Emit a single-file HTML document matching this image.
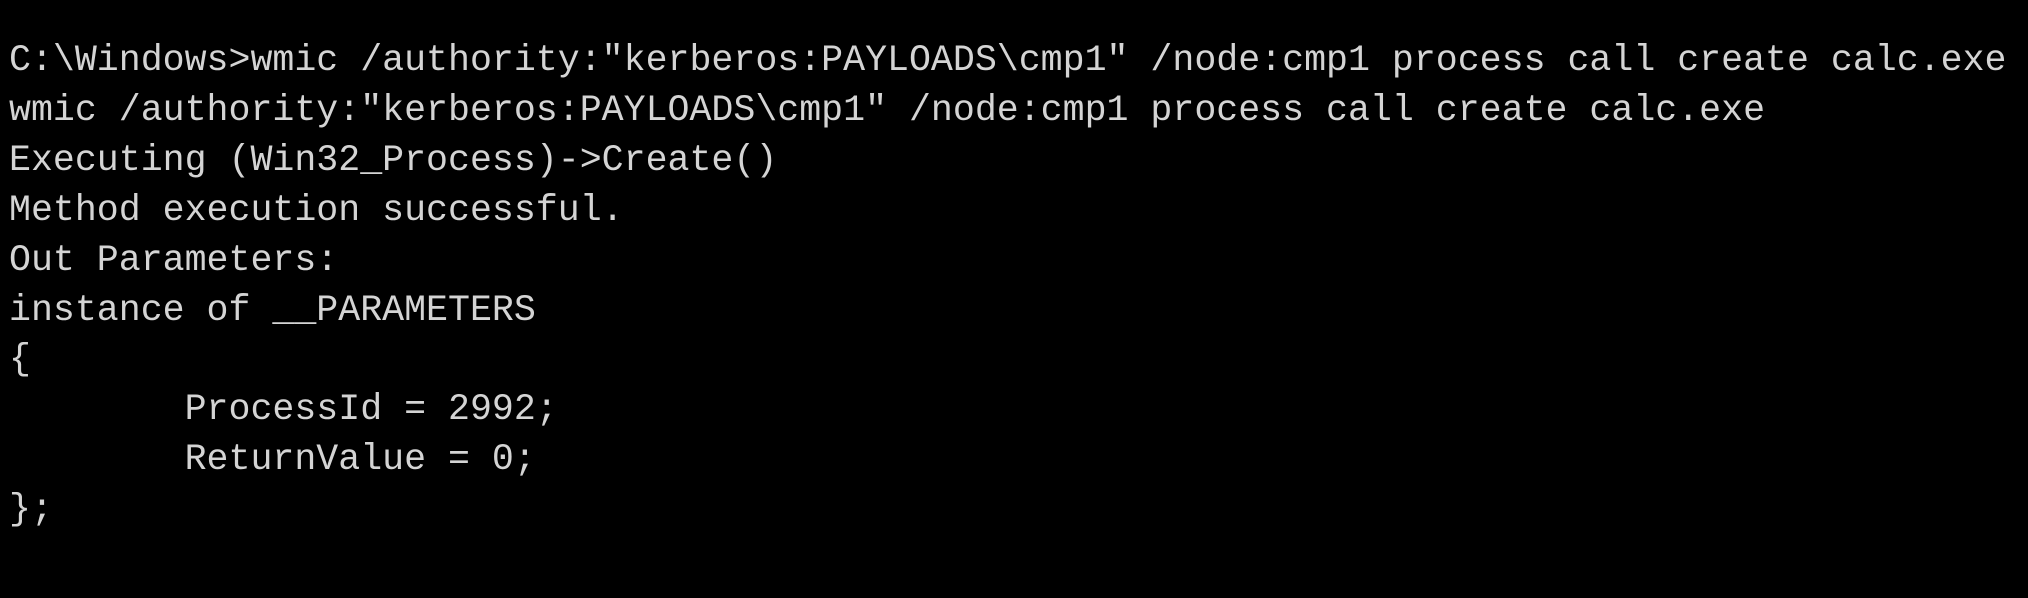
<!DOCTYPE html>
<html><head><meta charset="utf-8"><style>
html,body{margin:0;padding:0;background:#000;width:2028px;height:598px;overflow:hidden}
pre{margin:0;position:absolute;left:9px;top:36px;font-family:"Liberation Mono","DejaVu Sans Mono",monospace;font-size:36.6px;line-height:49.9px;color:#d4d4d4;white-space:pre}
</style></head><body>
<pre>C:\Windows&gt;wmic /authority:"kerberos:PAYLOADS\cmp1" /node:cmp1 process call create calc.exe
wmic /authority:"kerberos:PAYLOADS\cmp1" /node:cmp1 process call create calc.exe
Executing (Win32_Process)-&gt;Create()
Method execution successful.
Out Parameters:
instance of __PARAMETERS
{
        ProcessId = 2992;
        ReturnValue = 0;
};</pre>
</body></html>
